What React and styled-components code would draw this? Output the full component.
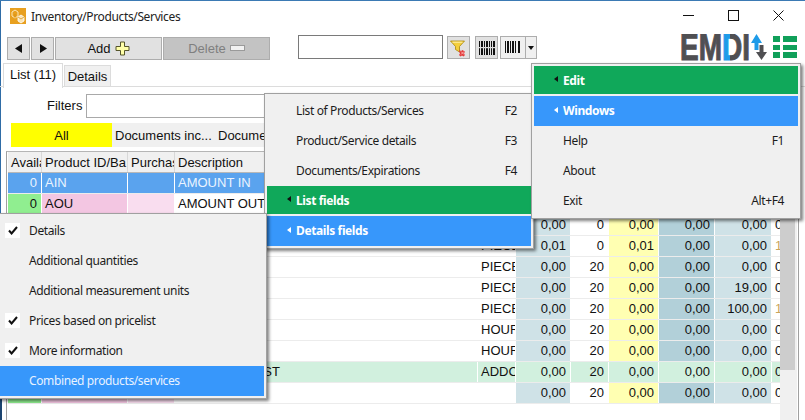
import React from "react";
import styled, { createGlobalStyle } from "styled-components";

const GlobalStyle = createGlobalStyle`
  html, body {
    margin: 0;
    padding: 0;
    background: #fff;
  }
  * {
    box-sizing: border-box;
  }
`;

const UI_FONT = `"Noto Sans", "Open Sans", sans-serif`;
const GRID_FONT = `"Liberation Sans", Arial, sans-serif`;

const Window = styled.div`
  position: relative;
  width: 805px;
  height: 420px;
  overflow: hidden;
  background: #fff;
  border-top: 1px solid #3b7ab4;
  font-family: ${GRID_FONT};
  color: #111;
`;

const LeftEdge = styled.div`
  position: absolute;
  left: 0;
  top: 0;
  width: 1px;
  height: 397px;
  background: #2f6ca6;
`;

const LeftEdgeBottom = styled.div`
  position: absolute;
  left: 0;
  top: 397px;
  width: 2px;
  height: 22px;
  background: #1c4470;
`;

const TitleBar = styled.div`
  display: flex;
  align-items: center;
  height: 30px;
  padding: 0 0 0 10px;
  font-family: ${UI_FONT};
  font-size: 12px;
  color: #222;
`;

const Title = styled.span`
  margin-left: 5px;
  letter-spacing: -0.36px;
`;

const WindowControls = styled.div`
  position: absolute;
  top: 0;
  right: 4px;
  display: flex;
`;

const ControlButton = styled.div`
  width: 45px;
  height: 28px;
  display: flex;
  align-items: center;
  justify-content: center;
`;

const Toolbar = styled.div`
  position: absolute;
  left: 7px;
  top: 35px;
  height: 24px;
  display: flex;
  align-items: center;
`;

const ToolButton = styled.div`
  width: ${(p) => p.$w}px;
  height: 23px;
  margin-right: 1px;
  display: flex;
  align-items: center;
  justify-content: center;
  gap: 4px;
  background: ${(p) => (p.$disabled ? "#c3c3c3" : "#e1e1e1")};
  border: 1px solid #adadad;
  color: ${(p) => (p.$disabled ? "#7f7f7f" : "#111")};
  font-size: 13px;
`;

const SearchBox = styled.div`
  position: absolute;
  left: 298px;
  top: 34px;
  width: 145px;
  height: 24px;
  background: #fff;
  border: 1px solid #7a7a7a;
`;

const IconButton = styled.div`
  position: absolute;
  left: ${(p) => p.$x}px;
  top: 35px;
  width: ${(p) => p.$w}px;
  height: 23px;
  display: flex;
  align-items: center;
  justify-content: center;
  background: ${(p) => p.$bg || "#e1e1e1"};
  border: 1px solid #adadad;
`;

const Logo = styled.div`
  position: absolute;
  left: 680px;
  top: 33px;
  width: 120px;
  height: 28px;
`;

const Tabs = styled.div`
  position: absolute;
  left: 0;
  right: 0;
  top: 62px;
  height: 24px;
  border-bottom: 1px solid #dcdcdc;
`;

const Tab = styled.div`
  position: absolute;
  left: ${(p) => p.$x}px;
  top: ${(p) => (p.$active ? 0 : 2)}px;
  width: ${(p) => p.$w}px;
  height: ${(p) => (p.$active ? 25 : 22)}px;
  padding-bottom: ${(p) => (p.$active ? 3 : 0)}px;
  display: flex;
  align-items: center;
  justify-content: center;
  font-size: 13px;
  background: ${(p) => (p.$active ? "#fff" : "#f0f0f0")};
  border: 1px solid #dcdcdc;
  border-bottom: ${(p) => (p.$active ? "none" : "1px solid #dcdcdc")};
  z-index: ${(p) => (p.$active ? 2 : 1)};
`;

const FilterLabel = styled.div`
  position: absolute;
  left: 47px;
  top: 97px;
  font-size: 13px;
  line-height: 16px;
`;

const FilterInput = styled.div`
  position: absolute;
  left: 86px;
  top: 93px;
  width: 660px;
  height: 24px;
  background: #fff;
  border: 1px solid #a9a9a9;
`;

const QuickBar = styled.div`
  position: absolute;
  left: 11px;
  top: 122px;
  width: 770px;
  height: 24px;
  display: flex;
  align-items: center;
  background: #f0f0f0;
  font-size: 13px;
`;

const QuickAll = styled.div`
  width: 101px;
  height: 24px;
  display: flex;
  align-items: center;
  justify-content: center;
  background: #ffff00;
`;

const QuickItem = styled.div`
  width: 103px;
  padding-left: 3px;
  white-space: nowrap;
  overflow: hidden;
`;

const Grid = styled.div`
  position: absolute;
  left: 6px;
  top: 150px;
  width: 775px;
  height: 270px;
  border-left: 1px solid #a0a0a0;
  border-top: 1px solid #b5b5b5;
  padding-left: 1px;
`;

const Row = styled.div`
  display: flex;
  height: 21px;
  background: ${(p) => (p.$header ? "#f0f0f0" : "#fff")};
  border-bottom: 1px solid ${(p) => (p.$header ? "#b8b8b8" : "#ececec")};
`;

const Cell = styled.div`
  width: ${(p) => p.$w}px;
  flex: none;
  height: 20px;
  line-height: 20px;
  padding: 0 ${(p) => (p.$right ? 4 : 0)}px 0 ${(p) => (p.$right ? 0 : 3)}px;
  margin-right: 1px;
  font-size: 13px;
  overflow: hidden;
  white-space: nowrap;
  text-align: ${(p) => (p.$right ? "right" : "left")};
  background: ${(p) => p.$bg || "transparent"};
  color: ${(p) => p.$color || "#111"};
`;

const HeaderCell = styled(Cell)`
  line-height: 22px;
  background: #f0f0f0;
  border-right: 1px solid #d8d8d8;
  margin-right: 0;
`;

const Scrollbar = styled.div`
  position: absolute;
  left: 780px;
  top: 151px;
  width: 17px;
  height: 269px;
  background: #f0f0f0;
`;

const ScrollThumb = styled.div`
  position: absolute;
  left: 0;
  top: 17px;
  width: 15px;
  height: 201px;
  background: #cdcdcd;
`;

const RightLine = styled.div`
  position: absolute;
  left: 798px;
  top: 150px;
  width: 1px;
  height: 270px;
  background: #a0a0a0;
`;

const Menu = styled.div`
  position: absolute;
  left: ${(p) => p.$x}px;
  top: ${(p) => p.$y}px;
  width: ${(p) => p.$w}px;
  padding: 2px;
  background: #f0f0f0;
  border: 1px solid #a0a0a0;
  box-shadow: 2px 2px 3px rgba(0, 0, 0, 0.5);
  font-family: ${UI_FONT};
  font-size: 12px;
  color: #1c1c1c;
  z-index: ${(p) => p.$z};
`;

const MenuItem = styled.div`
  position: relative;
  height: 30px;
  display: flex;
  align-items: center;
  justify-content: space-between;
  padding: 0 14px 1px 29px;
  letter-spacing: -0.38px;
`;

const SubmenuItem = styled(MenuItem)`
  height: ${(p) => (p.$green ? 28 : 30)}px;
  margin-bottom: ${(p) => (p.$green ? 2 : 0)}px;
  padding-bottom: ${(p) => (p.$green ? 0 : 1)}px;
  background: ${(p) => (p.$green ? "#10a85a" : "#3797fb")};
  color: #fff;
  font-weight: 700;
  justify-content: flex-start;
`;

const HighlightItem = styled(MenuItem)`
  background: #3797fb;
  color: #e8f2ff;
`;

const SubArrow = styled.span`
  position: absolute;
  left: 20px;
  top: 50%;
  margin-top: -4px;
  width: 0;
  height: 0;
  border-top: 3.5px solid transparent;
  border-bottom: 3.5px solid transparent;
  border-right: 4px solid ${(p) => p.$color};
`;

const CheckBox = styled.span`
  position: absolute;
  left: 5px;
  top: 7px;
  width: 15px;
  height: 15px;
  background: #fff;
  display: flex;
  align-items: center;
  justify-content: center;
`;

const columns = [
  { w: 33 },
  { w: 85 },
  { w: 46 },
  { w: 302 },
  { w: 37 },
  { w: 54, right: true, bg: "#cfe2e7" },
  { w: 37, right: true },
  { w: 49, right: true, bg: "#ffffb2" },
  { w: 55, right: true, bg: "#b2d0d9" },
  { w: 56, right: true, bg: "#cfe2e7" },
  { w: 8 },
];

const headers = ["Availa", "Product ID/Ba", "Purchas", "Description"];

const rows = [
  { kind: "sel", cells: ["0", "AIN", "", "AMOUNT IN", "", "", "", "", "", "", ""] },
  { kind: "pink", cells: ["0", "AOU", "", "AMOUNT OUT", "", "", "", "", "", "", ""] },
  { cells: ["", "", "", "", "PIECE", "0,00", "0", "0,00", "0,00", "0,00", "0"] },
  { cells: ["", "", "", "", "PIECE", "0,01", "0", "0,01", "0,00", "0,00", "1"] },
  { cells: ["", "", "", "", "PIECE", "0,00", "20", "0,00", "0,00", "0,00", "0"] },
  { cells: ["", "", "", "", "PIECE", "0,00", "20", "0,00", "0,00", "19,00", "0"] },
  { cells: ["", "", "", "", "PIECE", "0,00", "20", "0,00", "0,00", "100,00", "1"] },
  { cells: ["", "", "", "", "HOUR", "0,00", "20", "0,00", "0,00", "0,00", "0"] },
  { cells: ["", "", "", "", "HOUR", "0,00", "20", "0,00", "0,00", "0,00", "0"] },
  { kind: "green", cells: ["", "", "", "ADDITION COST", "ADDC", "0,00", "20", "0,00", "0,00", "0,00", "0"] },
  { kind: "last", cells: ["", "", "", "00", "", "0,00", "20", "0,00", "0,00", "0,00", "0"] },
];

function cellProps(row, i, text) {
  const col = columns[i];
  const props = { $w: col.w, $right: col.right, $bg: col.bg };
  if (i === 0) props.$right = true;
  if (i === 10 && text === "1") props.$color = "#c9a45c";
  if (row.kind === "sel") {
    props.$bg = "#5aa3ee";
    props.$color = "#eaf4ff";
  }
  if (row.kind === "green") props.$bg = "#d1f0de";
  if ((row.kind === "pink" || row.kind === "last") && i === 0) props.$bg = "#90ee90";
  if ((row.kind === "pink" || row.kind === "last") && i === 1) props.$bg = "#f3c6e2";
  if ((row.kind === "pink" || row.kind === "last") && i === 2) props.$bg = "#f9ddef";
  return props;
}

const AppIcon = () => (
  <svg width="16" height="16" viewBox="0 0 16 16">
    <rect width="16" height="16" fill="#e8a020" />
    <path d="M2 4l3-2 3 2v4l-3 2-3-2z" fill="none" stroke="#fbe6b8" strokeWidth="1" />
    <path d="M8 9l3-2 3 2v4l-3 2-3-2z" fill="#fbe6b8" stroke="#fff" strokeWidth="0.8" />
    <path d="M5 6v4M8 9l3 2 3-2" stroke="#d08a10" strokeWidth="0.7" fill="none" />
  </svg>
);

const Triangle = ({ dir }) => (
  <svg width="8" height="9" viewBox="0 0 8 9">
    <path d={dir === "left" ? "M7 0v9L0 4.5z" : "M1 0v9l7-4.5z"} fill="#111" />
  </svg>
);

const PlusIcon = () => (
  <svg width="15" height="15" viewBox="0 0 15 15">
    <path d="M5.500 1h4v4.500H14v4H9.500V14h-4V9.500H1v-4h4.500z" fill="#ffffa8" stroke="#55552a" strokeWidth="1" />
  </svg>
);

const MinusIcon = () => (
  <svg width="15" height="6" viewBox="0 0 15 6">
    <rect x="0.500" y="0.500" width="14" height="5" fill="#f2f2f2" stroke="#9a9a9a" />
  </svg>
);

const FilterIcon = () => (
  <svg width="17" height="18" viewBox="0 0 17 18">
    <path d="M0.500 2h14l-5 5.500V13l-4-2.500v-3z" fill="#f4cf3c" stroke="#a8860c" strokeWidth="0.8" />
    <path d="M2.500 3.200h10" stroke="#fff3b0" strokeWidth="1" />
    <path d="M9.500 11l1.500 1 1.500-1 1.500 1 1 .5-1 2 1 1.500-1.500 1.500-1.500-1-1.500 1-1.500-1.500 1-1.500-1-2z" fill="#e23b3b" />
    <path d="M11 12.500l3 3M14 12.500l-3 3" stroke="#ffc0c0" strokeWidth="0.8" />
  </svg>
);

const Barcode = ({ bars, split }) => (
  <svg width="16" height="14" viewBox="0 0 16 14">
    {bars.map(([x, w]) => (
      <rect key={x} x={x} y="0" width={w} height={split ? 14 : 12} fill="#111" />
    ))}
    {split && <rect x="0" y="6" width="16" height="1.200" fill="#ddd" />}
  </svg>
);

const DropArrow = () => (
  <svg width="6" height="4" viewBox="0 0 6 4">
    <path d="M0 0h6L3 4z" fill="#111" />
  </svg>
);

const CheckMark = () => (
  <svg width="10" height="9" viewBox="0 0 10 9">
    <path d="M1 4.500l2.600 3L9 1" fill="none" stroke="#111" strokeWidth="2" />
  </svg>
);

const EmdiLogo = () => (
  <svg width="120" height="28" viewBox="0 0 120 28">
    <defs>
      <linearGradient id="emdi" x1="0" x2="1" y1="0" y2="0">
        <stop offset="0.6" stopColor="#4f4f52" />
        <stop offset="0.6" stopColor="#1e9be8" />
        <stop offset="0.71" stopColor="#1e9be8" />
        <stop offset="0.71" stopColor="#4f4f52" />
      </linearGradient>
    </defs>
    <text x="0" y="26" fontFamily="Liberation Sans" fontWeight="700" fontSize="36" textLength="70" lengthAdjust="spacingAndGlyphs" fill="url(#emdi)" stroke="url(#emdi)" strokeWidth="1">EMDI</text>
    <path d="M71 9l5.500-9L82 9h-3.500v7h-4V9z" fill="#1e9be8" />
    <path d="M76 18h3.500v-7h4v7H87l-5.500 8z" fill="#4f4f52" />
    <path d="M93 2h7v6h-7zM103 2h14v6h-14zM93 11h7v5h-7zM103 11h14v5h-14zM93 18h7v6h-7zM103 18h14v6h-14z" fill="#10a05a" />
  </svg>
);

export default function App() {
  return (
    <>
      <GlobalStyle />
      <Window>
        <LeftEdge />
        <LeftEdgeBottom />
        <TitleBar>
          <AppIcon />
          <Title>Inventory/Products/Services</Title>
        </TitleBar>
        <WindowControls>
          <ControlButton>
            <svg width="11" height="11" viewBox="0 0 11 11"><path d="M0 5.500h11" stroke="#111" /></svg>
          </ControlButton>
          <ControlButton>
            <svg width="11" height="11" viewBox="0 0 11 11"><rect x="0.500" y="0.500" width="10" height="10" fill="none" stroke="#111" /></svg>
          </ControlButton>
          <ControlButton>
            <svg width="11" height="11" viewBox="0 0 11 11"><path d="M0.500 0.500l10 10M10.500 0.500l-10 10" stroke="#111" /></svg>
          </ControlButton>
        </WindowControls>

        <Toolbar>
          <ToolButton $w={23}><Triangle dir="left" /></ToolButton>
          <ToolButton $w={23}><Triangle dir="right" /></ToolButton>
          <ToolButton $w={107}>Add <PlusIcon /></ToolButton>
          <ToolButton $w={107} $disabled>Delete <MinusIcon /></ToolButton>
        </Toolbar>
        <SearchBox />
        <IconButton $x={447} $w={23}><FilterIcon /></IconButton>
        <IconButton $x={475} $w={23}>
          <Barcode split bars={[[0, 1], [2, 2], [5, 1], [7, 2], [10, 1], [12, 1], [14, 2]]} />
        </IconButton>
        <IconButton $x={500} $w={26} $bg="#f0f0f0">
          <Barcode bars={[[0, 1], [2, 2], [5, 1], [7, 2], [10, 1], [13, 2]]} />
        </IconButton>
        <IconButton $x={525} $w={12} $bg="#f0f0f0"><DropArrow /></IconButton>
        <Logo><EmdiLogo /></Logo>

        <Tabs>
          <Tab $x={3} $w={60} $active>List (11)</Tab>
          <Tab $x={64} $w={47}>Details</Tab>
        </Tabs>

        <FilterLabel>Filters</FilterLabel>
        <FilterInput />
        <QuickBar>
          <QuickAll>All</QuickAll>
          <QuickItem>Documents inc...</QuickItem>
          <QuickItem>Documents</QuickItem>
        </QuickBar>

        <Grid>
          <Row $header>
            {headers.map((h, i) => (
              <HeaderCell key={h} $w={columns[i].w + 1}>{h}</HeaderCell>
            ))}
          </Row>
          {rows.map((row, r) => (
            <Row key={r}>
              {row.cells.map((c, i) => (
                <Cell key={i} {...cellProps(row, i, c)}>{c}</Cell>
              ))}
            </Row>
          ))}
        </Grid>
        <Scrollbar><ScrollThumb /></Scrollbar>
        <RightLine />

        <Menu $x={531} $y={62} $w={270} $z={3}>
          <SubmenuItem $green><SubArrow $color="#111" />Edit</SubmenuItem>
          <SubmenuItem><SubArrow $color="#fff" />Windows</SubmenuItem>
          <MenuItem><span>Help</span><span>F1</span></MenuItem>
          <MenuItem><span>About</span></MenuItem>
          <MenuItem><span>Exit</span><span>Alt+F4</span></MenuItem>
        </Menu>

        <Menu $x={264} $y={92} $w={270} $z={2}>
          <MenuItem><span>List of Products/Services</span><span>F2</span></MenuItem>
          <MenuItem><span>Product/Service details</span><span>F3</span></MenuItem>
          <MenuItem><span>Documents/Expirations</span><span>F4</span></MenuItem>
          <SubmenuItem $green><SubArrow $color="#111" />List fields</SubmenuItem>
          <SubmenuItem><SubArrow $color="#fff" />Details fields</SubmenuItem>
        </Menu>

        <Menu $x={-3} $y={212} $w={270} $z={4}>
          <MenuItem><CheckBox><CheckMark /></CheckBox><span>Details</span></MenuItem>
          <MenuItem><span>Additional quantities</span></MenuItem>
          <MenuItem><span>Additional measurement units</span></MenuItem>
          <MenuItem><CheckBox><CheckMark /></CheckBox><span>Prices based on pricelist</span></MenuItem>
          <MenuItem><CheckBox><CheckMark /></CheckBox><span>More information</span></MenuItem>
          <HighlightItem><span>Combined products/services</span></HighlightItem>
        </Menu>
      </Window>
    </>
  );
}
